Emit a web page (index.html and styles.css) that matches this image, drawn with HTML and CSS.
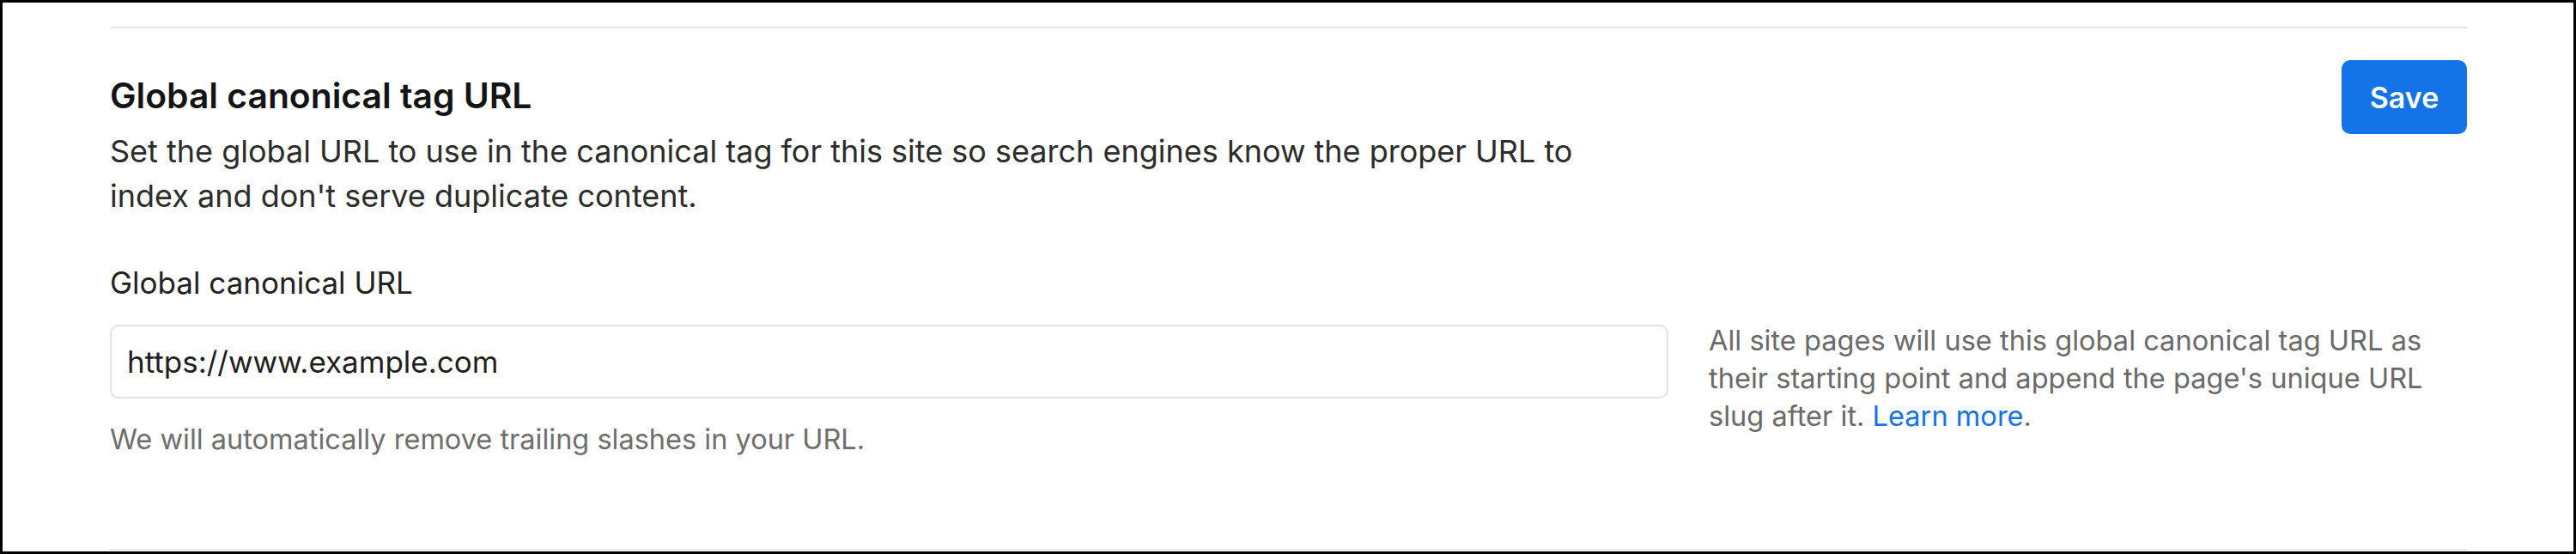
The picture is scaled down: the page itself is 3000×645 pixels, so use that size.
FILE: index.html
```html
<!DOCTYPE html>
<html lang="en">
<head>
<meta charset="utf-8">
<title>Global canonical tag URL</title>
<link rel="stylesheet" href="styles.css">
</head>
<body>
<div class="frame">
  <section class="section">
    <div class="header">
      <div class="intro">
        <h2 class="title">Global canonical tag URL</h2>
        <p class="desc">Set the global URL to use in the canonical tag for this site so search engines know the proper URL to index and don't serve duplicate content.</p>
      </div>
      <button class="save" type="button">Save</button>
    </div>
    <div class="field">
      <label class="label" for="canon">Global canonical URL</label>
      <input class="input" id="canon" type="text" value="https://www.example.com">
      <p class="note">All site pages will use this global canonical tag URL as their starting point and append the page's unique URL slug after it. <a class="link" href="#">Learn more</a>.</p>
      <p class="help">We will automatically remove trailing slashes in your URL.</p>
    </div>
  </section>
</div>
</body>
</html>
```
FILE: styles.css
```css
html, body {
  margin: 0;
  padding: 0;
}
body {
  width: 3000px;
  height: 645px;
  background: #000;
  font-family: Inter, "Noto Sans", sans-serif;
  color: #1f1f1f;
}
.frame {
  box-sizing: border-box;
  margin: 3px;
  width: 2994px;
  height: 639px;
  background: #fff;
  padding: 0 124px 0 125px;
  overflow: hidden;
}
.section {
  border-top: 2px solid #e8e8e8;
  border-bottom: 2px solid #e8e8e8;
  margin-top: 28px;
  height: 610px;
  box-sizing: border-box;
}
.header {
  display: flex;
  justify-content: space-between;
  align-items: flex-start;
}
.title {
  margin: 54px 0 0;
  font-size: 40.8px;
  line-height: 48px;
  font-weight: 600;
  color: #141414;
}
.desc {
  margin: 15px 0 0;
  width: 1740px;
  font-size: 36px;
  line-height: 52px;
  color: #2c2c2c;
}
.save {
  margin-top: 37px;
  width: 146px;
  height: 86px;
  border: 0;
  border-radius: 10px;
  background: #1473e6;
  color: #fff;
  font-family: Inter, "Noto Sans", sans-serif;
  font-size: 34px;
  font-weight: 600;
  padding: 0;
}
.field {
  display: grid;
  grid-template-columns: 1815px 1fr;
  column-gap: 47px;
  margin-top: 53px;
}
.label {
  grid-column: 1;
  grid-row: 1;
  font-size: 35px;
  line-height: 44px;
  color: #222;
}
.input {
  grid-column: 1;
  grid-row: 2;
  box-sizing: border-box;
  margin-top: 27px;
  height: 86px;
  width: 100%;
  border: 2px solid #e3e3e3;
  border-radius: 10px;
  padding: 0 18px;
  font-family: Inter, "Noto Sans", sans-serif;
  font-size: 35px;
  color: #1f1f1f;
  background: #fff;
  outline: none;
}
.note {
  grid-column: 2;
  grid-row: 2 / span 2;
  margin: 23px 0 0;
  width: 870px;
  font-size: 32.6px;
  line-height: 44px;
  color: #6a6a6a;
}
.link {
  color: #1473e6;
  text-decoration: none;
}
.help {
  grid-column: 1;
  grid-row: 3;
  margin: 26px 0 0;
  font-size: 32.5px;
  line-height: 44px;
  color: #6e6e6e;
}
```
